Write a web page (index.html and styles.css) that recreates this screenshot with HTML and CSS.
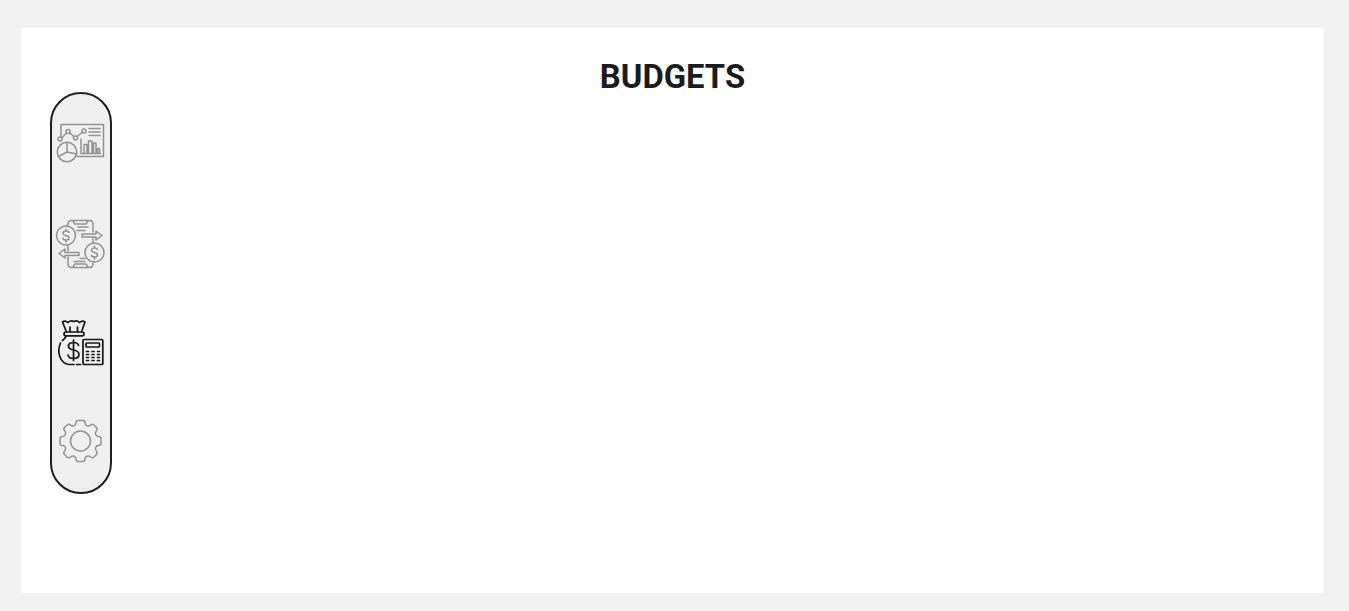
FILE: index.html
```html
<!DOCTYPE html>
<html lang="en">
<head>
<meta charset="utf-8">
<title>Budgets</title>
<link rel="stylesheet" href="styles.css">
</head>
<body>
<main class="panel">
  <h1 class="title">BUDGETS</h1>
  <nav class="sidebar">
    <a class="item" aria-label="Dashboard">
      <svg class="icon" viewBox="2 -3 58 60">
        <path d="M11 21V9.500H53.500V41.500H27"/>
        <path d="M12 22.500L16.500 18M20 18L24 21.500M27 21.500L32 17.500"/>
        <circle cx="10" cy="24" r="2"/><circle cx="18" cy="16.500" r="2"/><circle cx="25.500" cy="23" r="2"/><circle cx="34" cy="16" r="2"/>
        <path d="M39 13.500H50M39 17H50M39 20.500H50"/>
        <path d="M31 24V38.500H50.500M34 38V29.500H37V38M38.500 38V26H42V38M43.500 38V28H46V38M47.500 38V33.500H49.500V38"/>
        <circle cx="17" cy="37" r="9.700"/>
        <path d="M17 27.500V37L8.500 41.500M17 37L26.500 39"/>
      </svg>
    </a>
    <a class="item" aria-label="Transactions">
      <svg class="icon" viewBox="2 0 58 60">
        <path d="M18 14V12Q18 8.500 21.500 8.500H39Q43 8.500 43 12V20M43 26V31M18 33V39M18 45V52Q18 55.500 21.500 55.500H39Q43 55.500 43 52V51M23 9L25 12H36L38 9M23 55L25 52H36L38 55"/>
        <path d="M28 15H38M27 18.500H35M30 46.500H35M24 49.500H35"/>
        <path d="M32 22H46V19L52 23.500L46 28V25H32ZM29 40.500H15V37L9 41.500L15 46V43.500H29Z"/>
        <circle cx="16" cy="23.500" r="9.500"/><circle cx="44.500" cy="40.500" r="9.500"/>
        <path d="M19 20.500Q18.500 19 16 19Q13 19 13 21.200Q13 23 16 23.500Q19 24 19 26Q19 28 16 28Q13.300 28 13 26.300M16 17V19M16 28V30M47.500 37.500Q47 36 44.500 36Q41.500 36 41.500 38.200Q41.500 40 44.500 40.500Q47.500 41 47.500 43Q47.500 45 44.500 45Q41.800 45 41.500 43.300M44.500 34V36M44.500 45V47"/>
      </svg>
    </a>
    <a class="item item-active" aria-label="Budgets">
      <svg class="icon" viewBox="2 0 58 60">
        <path d="M16.500 20L12.500 10Q15 8 18 10.500Q20.500 8 24 9.500Q27 8 29.500 10.500Q32.500 8 35 10L31.500 20M20 15V19.500M27.500 15V19.500"/>
        <rect x="14" y="20" width="20" height="3.800" rx="1.900"/>
        <path d="M16 24.500Q14.500 27 12.500 28.500M10.500 31Q7.500 38 9.800 44.500Q12.500 52 19 52.500H24M26.500 52.500H30.500"/>
        <path d="M28.500 33.500Q28 30.500 23.500 30.500Q18.500 30.500 18.500 34Q18.500 37 23.500 38Q29 39 29 42.500Q29 46.500 23.500 46.500Q18.500 46.500 18 43M23.500 28V48.500"/>
        <rect x="33" y="27.500" width="19.800" height="25" rx="1"/>
        <rect x="36" y="31" width="13.500" height="4" rx="1"/>
        <path d="M36.500 39.500H38.500M42 39.500H44M47.500 39.500H49.500M36.500 42.500H38.500M42 42.500H44M47.500 42.500H49.500M36.500 45.500H38.500M42 45.500H44M47.500 45.500H49.500M36.500 48.500H38.500M42 48.500H44M47.500 48.500H49.500"/>
      </svg>
    </a>
    <a class="item" aria-label="Settings">
      <svg class="icon" viewBox="2 0 58 60">
        <path d="M26 11Q26 8.500 28 8.500H33Q35 8.500 35 11Q35 13 37 13.800Q39 14.500 40.500 13Q42.300 11.500 44 13L46.500 15.500Q48 17 46.300 19Q45 20.500 45.600 22.500Q46.500 24.500 48.500 24.500Q51 24.500 51 26.500V31.500Q51 33.500 48.500 33.500Q46.500 33.500 45.600 35.500Q45 37.500 46.300 39Q48 41 46.500 42.500L44 45Q42.300 46.500 40.500 45Q39 43.500 37 44.200Q35 45 35 47Q35 49.500 33 49.500H28Q26 49.500 26 47Q26 45 24 44.200Q22 43.500 20.500 45Q18.700 46.500 17 45L14.500 42.500Q13 41 14.700 39Q16 37.500 15.400 35.500Q14.500 33.500 12.500 33.500Q10 33.500 10 31.500V26.500Q10 24.500 12.500 24.500Q14.500 24.500 15.400 22.500Q16 20.500 14.700 19Q13 17 14.500 15.500L17 13Q18.700 11.500 20.500 13Q22 14.500 24 13.800Q26 13 26 11Z"/>
        <circle cx="30.500" cy="29" r="10"/>
      </svg>
    </a>
  </nav>
</main>
</body>
</html>
```
FILE: styles.css
```css
* {
  box-sizing: border-box;
}

body {
  margin: 0;
  height: 611px;
  padding: 28px 25px 18px 21px;
  overflow: hidden;
  background: #f1f1f1;
  font-family: Roboto, sans-serif;
}

.panel {
  height: 565px;
  padding: 28px 29px 0;
  background: #fff;
}

.title {
  margin: 0;
  height: 36px;
  color: #1b1b1b;
  font-size: 34px;
  font-weight: 700;
  line-height: 40px;
  text-align: center;
  transform: scaleX(0.965);
}

.sidebar {
  display: flex;
  flex-direction: column;
  gap: 40px;
  width: 62px;
  height: 402px;
  padding-top: 18px;
  border: 2px solid #1f1f1f;
  border-radius: 31px;
  background: #efefef;
}

.item {
  display: block;
  height: 60px;
  color: #929292;
}

.item-active {
  color: #151515;
}

.icon {
  display: block;
  width: 58px;
  height: 60px;
  fill: none;
  stroke: currentColor;
  stroke-width: 1.5;
  stroke-linecap: round;
  stroke-linejoin: round;
}

.item-active .icon {
  stroke-width: 1.7;
}
```
